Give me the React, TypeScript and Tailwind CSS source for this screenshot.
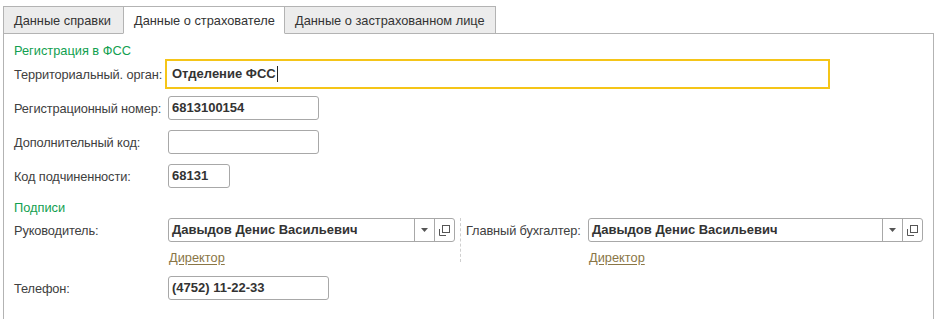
import { ReactNode } from 'react';

const font = { fontFamily: '"Liberation Sans", Arial, sans-serif' };

function Tab({ label, active, w }: { label: string; active?: boolean; w: string }) {
  return (
    <div
      className={`${w} h-[28px] flex items-center pl-[10px] pt-px border border-[#b3b3b3] -ml-px first:ml-0 text-[12.8px] text-[#333] ${
        active ? 'bg-white border-b-white relative z-10' : 'bg-[#ececec]'
      }`}
    >
      {label}
    </div>
  );
}

function Label({ children, w = 'w-[154px]' }: { children: ReactNode; w?: string }) {
  return (
    <div className={`${w} shrink-0 text-[12.8px] tracking-[-0.12px] text-[#404040] whitespace-nowrap pt-px relative z-10`}>
      {children}
    </div>
  );
}

function Field({ value, w }: { value?: string; w: string }) {
  return (
    <div
      className={`${w} h-[24px] border border-[#a8a8a8] rounded-[3px] bg-white flex items-center pl-[3px] text-[13px] font-bold text-[#333]`}
    >
      {value}
    </div>
  );
}

function Combo({ value, w }: { value: string; w: string }) {
  return (
    <div className={`${w} h-[24px] border border-[#a8a8a8] rounded-[3px] bg-white flex items-stretch text-[13px]`}>
      <div className="flex-1 flex items-center pl-[3px] font-bold text-[#333] whitespace-nowrap overflow-hidden">{value}</div>
      <div className="w-[20px] border-l border-[#a8a8a8] flex items-center justify-center">
        <svg width="7" height="4" viewBox="0 0 7 4">
          <path d="M0 0h7L3.5 4z" fill="#555" />
        </svg>
      </div>
      <div className="w-[20px] border-l border-[#a8a8a8] flex items-center justify-center">
        <svg width="11" height="11" viewBox="0 0 11 11" fill="none" stroke="#555" strokeWidth="1">
          <rect x="3.5" y="0.5" width="7" height="7" />
          <path d="M0.5 4v6.5H7" />
        </svg>
      </div>
    </div>
  );
}

function Link({ children }: { children: ReactNode }) {
  return <span className="text-[12.8px] text-[#8a7646] underline underline-offset-2">{children}</span>;
}

export default function App() {
  return (
    <div className="w-[941px] h-[319px] bg-white overflow-hidden" style={font}>
      <div className="pt-[6px] pl-[3px] flex">
        <Tab label="Данные справки" w="w-[121px]" />
        <Tab label="Данные о страхователе" w="w-[162px]" active />
        <Tab label="Данные о застрахованном лице" w="w-[212px]" />
      </div>
      <div className="-mt-px ml-[3px] w-[931px] h-[300px] border border-[#b3b3b3] pl-[10px]">
        <div className="mt-[5px] h-[20px] flex items-center pt-[4px] text-[12.8px] text-[#12a050]">Регистрация в ФСС</div>

        <div className="h-[30px] flex items-center">
          <Label>Территориальный. орган:</Label>
          <div className="-ml-[3px] w-[665px] h-[30px] border-2 border-[#f5c518] flex items-center pl-[5px] text-[13px] font-bold text-[#333]">
            Отделение ФСС
            <span className="inline-block w-px h-[16px] bg-[#222] ml-px" />
          </div>
        </div>

        <div className="mt-[7px] h-[24px] flex items-center">
          <Label>Регистрационный номер:</Label>
          <Field value="6813100154" w="w-[151px]" />
        </div>

        <div className="mt-[10px] h-[24px] flex items-center">
          <Label>Дополнительный код:</Label>
          <Field w="w-[151px]" />
        </div>

        <div className="mt-[10px] h-[24px] flex items-center">
          <Label>Код подчиненности:</Label>
          <Field value="68131" w="w-[62px]" />
        </div>

        <div className="mt-[9px] h-[20px] flex items-center pt-[2px] text-[12.8px] text-[#12a050]">Подписи</div>

        <div className="mt-px flex">
          <div className="h-[24px] flex items-center">
            <Label>Руководитель:</Label>
          </div>
          <div className="flex flex-col">
            <Combo value="Давыдов Денис Васильевич" w="w-[287px]" />
            <div className="mt-[6px] h-[18px] flex items-center pl-px pt-px">
              <Link>Директор</Link>
            </div>
          </div>
          <div className="ml-[5px] w-0 h-[44px] border-l border-dashed border-[#cfcfcf]" />
          <div className="ml-[5px] h-[24px] flex items-center">
            <Label w="w-[122px]">Главный бухгалтер:</Label>
          </div>
          <div className="flex flex-col">
            <Combo value="Давыдов Денис Васильевич" w="w-[335px]" />
            <div className="mt-[6px] h-[18px] flex items-center pl-px pt-px">
              <Link>Директор</Link>
            </div>
          </div>
        </div>

        <div className="mt-[10px] h-[24px] flex items-center">
          <Label>Телефон:</Label>
          <Field value="(4752) 11-22-33" w="w-[161px]" />
        </div>
      </div>
    </div>
  );
}
